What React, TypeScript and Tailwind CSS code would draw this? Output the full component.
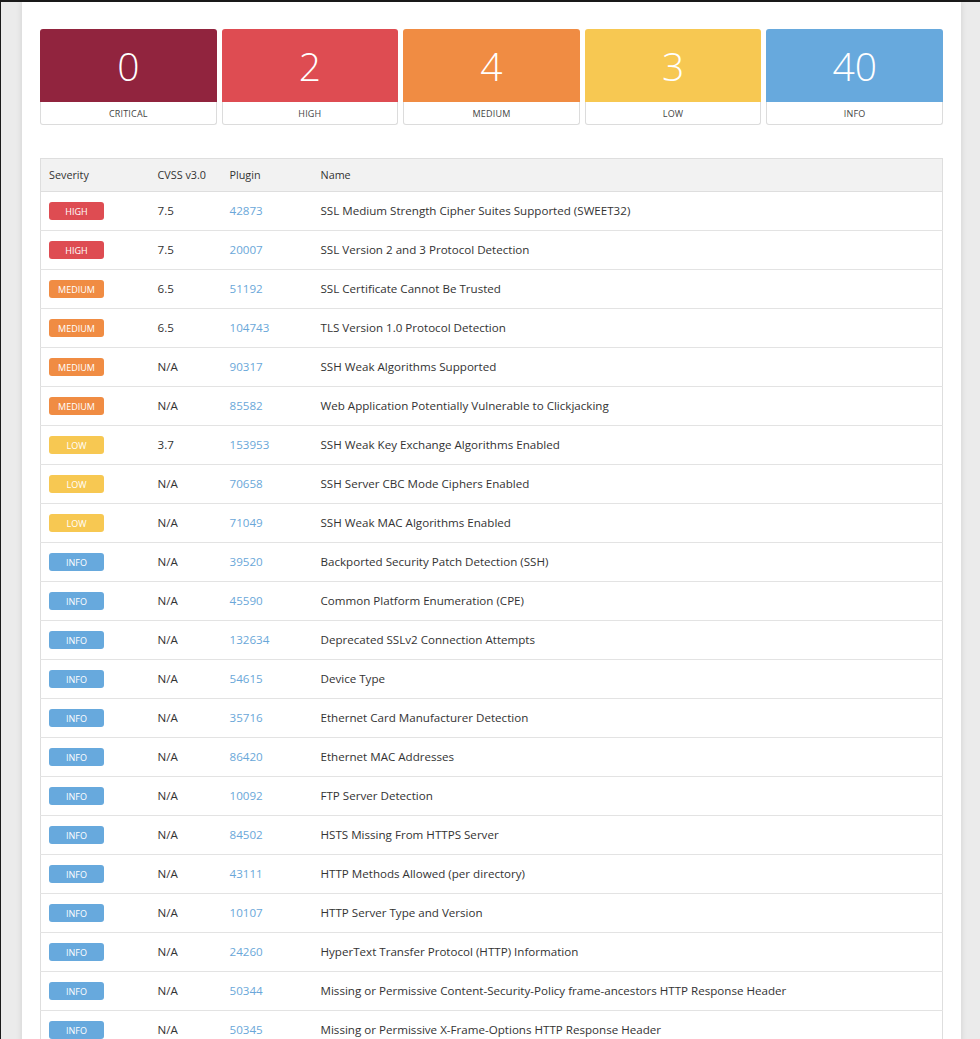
import React from 'react';

type Sev = 'CRITICAL' | 'HIGH' | 'MEDIUM' | 'LOW' | 'INFO';

const badgeBg: Record<Sev, string> = {
  CRITICAL: 'bg-[#91243e]',
  HIGH: 'bg-[#de4c52]',
  MEDIUM: 'bg-[#f08c43]',
  LOW: 'bg-[#f7c852]',
  INFO: 'bg-[#67a9dd]',
};

const summary: { sev: Sev; count: number }[] = [
  { sev: 'CRITICAL', count: 0 },
  { sev: 'HIGH', count: 2 },
  { sev: 'MEDIUM', count: 4 },
  { sev: 'LOW', count: 3 },
  { sev: 'INFO', count: 40 },
];

const rows: [Sev, string, string, string][] = [
  ['HIGH', '7.5', '42873', 'SSL Medium Strength Cipher Suites Supported (SWEET32)'],
  ['HIGH', '7.5', '20007', 'SSL Version 2 and 3 Protocol Detection'],
  ['MEDIUM', '6.5', '51192', 'SSL Certificate Cannot Be Trusted'],
  ['MEDIUM', '6.5', '104743', 'TLS Version 1.0 Protocol Detection'],
  ['MEDIUM', 'N/A', '90317', 'SSH Weak Algorithms Supported'],
  ['MEDIUM', 'N/A', '85582', 'Web Application Potentially Vulnerable to Clickjacking'],
  ['LOW', '3.7', '153953', 'SSH Weak Key Exchange Algorithms Enabled'],
  ['LOW', 'N/A', '70658', 'SSH Server CBC Mode Ciphers Enabled'],
  ['LOW', 'N/A', '71049', 'SSH Weak MAC Algorithms Enabled'],
  ['INFO', 'N/A', '39520', 'Backported Security Patch Detection (SSH)'],
  ['INFO', 'N/A', '45590', 'Common Platform Enumeration (CPE)'],
  ['INFO', 'N/A', '132634', 'Deprecated SSLv2 Connection Attempts'],
  ['INFO', 'N/A', '54615', 'Device Type'],
  ['INFO', 'N/A', '35716', 'Ethernet Card Manufacturer Detection'],
  ['INFO', 'N/A', '86420', 'Ethernet MAC Addresses'],
  ['INFO', 'N/A', '10092', 'FTP Server Detection'],
  ['INFO', 'N/A', '84502', 'HSTS Missing From HTTPS Server'],
  ['INFO', 'N/A', '43111', 'HTTP Methods Allowed (per directory)'],
  ['INFO', 'N/A', '10107', 'HTTP Server Type and Version'],
  ['INFO', 'N/A', '24260', 'HyperText Transfer Protocol (HTTP) Information'],
  ['INFO', 'N/A', '50344', 'Missing or Permissive Content-Security-Policy frame-ancestors HTTP Response Header'],
  ['INFO', 'N/A', '50345', 'Missing or Permissive X-Frame-Options HTTP Response Header'],
];

const App = () => {
  return (
    <div className="min-h-screen bg-[#1b1b1b] pt-[2px] pl-[1px] font-['Open_Sans',sans-serif] text-[#333]">
      <div className="flex min-h-[1037px] bg-[#ebebeb]">
        <div className="ml-[21px] w-[939px] bg-white px-[18px] pt-[27px] shadow-[0_0_6px_rgba(0,0,0,0.12)]">
          {/* Summary cards */}
          <div className="grid grid-cols-5 gap-[5px]">
            {summary.map((s) => (
              <div key={s.sev} className="flex flex-col">
                <div
                  className={`${badgeBg[s.sev]} flex h-[73px] items-center justify-center rounded-t-[3px] text-[39px] font-light leading-none text-white`}
                >
                  {s.count}
                </div>
                <div className="flex h-[23px] items-center justify-center rounded-b-[3px] border border-t-0 border-[#dcdcdc] pt-[1px] text-[9px] tracking-[0.02em] text-[#444]">
                  {s.sev}
                </div>
              </div>
            ))}
          </div>

          {/* Findings table */}
          <table className="mt-[33px] w-full border-collapse border border-[#dedede] text-[11.6px]">
            <thead>
              <tr className="h-[33px] bg-[#f2f2f2] text-left">
                <th className="w-[109px] border-b border-[#dedede] pl-[8px] text-[10.8px] font-normal">Severity</th>
                <th className="w-[72px] border-b border-[#dedede] pl-[8px] text-[10.8px] font-normal">CVSS v3.0</th>
                <th className="w-[91px] border-b border-[#dedede] pl-[8px] text-[10.8px] font-normal">Plugin</th>
                <th className="border-b border-[#dedede] pl-[8px] text-[10.8px] font-normal">Name</th>
              </tr>
            </thead>
            <tbody>
              {rows.map(([sev, cvss, plugin, name]) => (
                <tr key={plugin} className="h-[39px] border-b border-[#e3e3e3]">
                  <td className="pl-[8px]">
                    <span
                      className={`${badgeBg[sev]} inline-flex h-[18px] w-[55px] items-center justify-center rounded-[3px] text-[9px] text-white`}
                    >
                      {sev}
                    </span>
                  </td>
                  <td className="pl-[8px]">{cvss}</td>
                  <td className="pl-[8px] text-[#6aa7d9]">{plugin}</td>
                  <td className="pl-[8px]">{name}</td>
                </tr>
              ))}
            </tbody>
          </table>
        </div>
      </div>
    </div>
  );
};

export default App;
